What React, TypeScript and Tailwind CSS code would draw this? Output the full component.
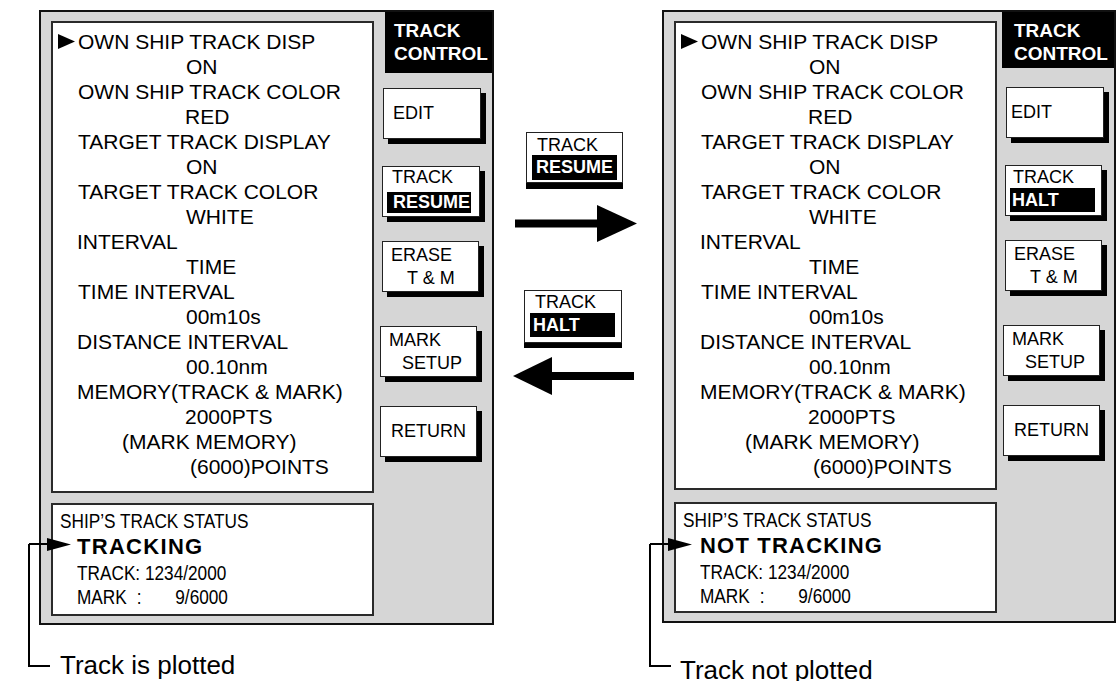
import React from "react";

const SANS = "font-['Liberation_Sans',Arial,sans-serif]";
// no Arial Narrow on the box, so squeeze regular sans instead
const NARROW = "origin-left scale-x-[0.82] whitespace-pre";

type MenuRow = { text: string; pl: string; marker?: boolean };

const menuRows: MenuRow[] = [
  { text: "OWN SHIP TRACK DISP", pl: "pl-[5px]", marker: true },
  { text: "ON", pl: "pl-[133px]" },
  { text: "OWN SHIP TRACK COLOR", pl: "pl-[25px]" },
  { text: "RED", pl: "pl-[132px]" },
  { text: "TARGET TRACK DISPLAY", pl: "pl-[25px]" },
  { text: "ON", pl: "pl-[133px]" },
  { text: "TARGET TRACK COLOR", pl: "pl-[25px]" },
  { text: "WHITE", pl: "pl-[133px]" },
  { text: "INTERVAL", pl: "pl-[24px]" },
  { text: "TIME", pl: "pl-[133px]" },
  { text: "TIME INTERVAL", pl: "pl-[25px]" },
  { text: "00m10s", pl: "pl-[133px]" },
  { text: "DISTANCE INTERVAL", pl: "pl-[24px]" },
  { text: "00.10nm", pl: "pl-[133px]" },
  { text: "MEMORY(TRACK & MARK)", pl: "pl-[24px]" },
  { text: "2000PTS", pl: "pl-[132px]" },
  { text: "(MARK MEMORY)", pl: "pl-[69px]" },
  { text: "(6000)POINTS", pl: "pl-[137px]" },
];

const Marker = () => (
  <svg width="17" height="15" viewBox="0 0 17 15" className="mr-[3px] shrink-0">
    <path d="M0 0 L17 7.5 L0 15 Z" fill="#000" />
  </svg>
);

const RightArrow = () => (
  <svg width="122" height="37" viewBox="0 0 122 37">
    <rect x="0" y="14.5" width="84" height="8" fill="#000" />
    <path d="M82 0 L122 18.5 L82 37 Z" fill="#000" />
  </svg>
);

const LeftArrow = () => (
  <svg width="121" height="38" viewBox="0 0 121 38">
    <path d="M0 19 L39 0 L39 38 Z" fill="#000" />
    <rect x="37" y="15" width="84" height="8" fill="#000" />
  </svg>
);

// framed key with a reversed (black) second line
const TrackKey = ({
  label,
  box,
  top,
  bar,
  barText,
}: {
  label: string;
  box: string;
  top: string;
  bar: string;
  barText: string;
}) => (
  <div className={`bg-white border border-[#222] flex flex-col ${box}`}>
    <div className={`text-[18px] leading-[20px] ${top}`}>TRACK</div>
    <div className={`bg-black text-white font-bold text-[18px] ${bar}`}>
      <span className={barText}>{label}</span>
    </div>
  </div>
);

const Key = ({ className, children }: { className: string; children: React.ReactNode }) => (
  <div
    className={`w-[97px] h-[51px] bg-white border border-[#222] shadow-[5px_5px_0_#000] flex flex-col justify-center text-[18px] leading-[23px] ${className}`}
  >
    {children}
  </div>
);

type PanelProps = {
  halt?: boolean;
  status: string;
  statusTrack: string;
  size: string;
  menuH: string;
  statusBox: string;
  header: string;
  headerPl: string;
  mt: string[];
  editPl: string;
};

const Panel = (p: PanelProps) => (
  <div className={`border-2 border-[#111] bg-[#d6d6d6] flex shrink-0 ${p.size}`}>
    <div className="flex flex-col pl-[10px] pt-[9px]">
      <div className={`w-[323px] bg-white border-2 border-[#2a2a2a] pt-[6px] text-[21px] leading-[25px] ${p.menuH}`}>
        {menuRows.map((r, i) => (
          <div key={i} className={`flex items-center whitespace-pre ${r.pl}`}>
            {r.marker && <Marker />}
            {r.text}
          </div>
        ))}
      </div>
      <div className={`w-[323px] bg-white border-2 border-[#2a2a2a] pt-[3px] ${p.statusBox}`}>
        <div className="pl-[7px] text-[21px] leading-[26px]">
          <div className={NARROW}>SHIP’S TRACK STATUS</div>
        </div>
        <div className={`font-bold text-[22px] leading-[26px] pl-[24px] ${p.statusTrack}`}>{p.status}</div>
        <div className="pl-[24px] text-[21px] leading-[25px]">
          <div className={NARROW}>TRACK: 1234/2000</div>
        </div>
        <div className="pl-[24px] text-[21px] leading-[24px]">
          <div className={`${NARROW} flex`}>
            <span className="w-[73px]">MARK</span>
            <span>:</span>
            <span className="ml-[41px]">9/6000</span>
          </div>
        </div>
      </div>
    </div>

    <div className="flex-1 flex flex-col">
      <div className={`bg-black text-white font-bold text-[19px] leading-[23px] pt-[7px] ${p.header} ${p.headerPl}`}>
        <div>TRACK</div>
        <div>CONTROL</div>
      </div>
      <Key className={`${p.mt[0]} ml-[9px] w-[98px] ${p.editPl}`}>EDIT</Key>
      <div className={`${p.mt[1]} ml-[8px] shadow-[5px_5px_0_#000] w-fit`}>
        {p.halt ? (
          <TrackKey
            label="HALT"
            box="w-[97px] h-[51px]"
            top="mt-[1px] pl-[7px]"
            bar="mt-[1px] ml-[4px] w-[85px] h-[24px] leading-[24px]"
            barText="pl-[2px]"
          />
        ) : (
          <TrackKey
            label="RESUME"
            box="w-[98px] h-[51px]"
            top="pl-[9px]"
            bar="mt-[5px] ml-[4px] w-[84px] h-[21px] leading-[21px]"
            barText="pl-[6px]"
          />
        )}
      </div>
      <Key className={`${p.mt[2]} ml-[8px]`}>
        <div className="pl-[8px]">ERASE</div>
        <div className="pl-[24px]">T &amp; M</div>
      </Key>
      <Key className={`${p.mt[3]} ml-[6px]`}>
        <div className="pl-[8px]">MARK</div>
        <div className="pl-[21px]">SETUP</div>
      </Key>
      <Key className={`${p.mt[4]} ml-[6px] pl-[10px]`}>RETURN</Key>
    </div>
  </div>
);

export default function App() {
  return (
    <div className={`${SANS} relative w-[1116px] h-[681px] bg-white text-black overflow-hidden`}>
      <div className="flex items-start pt-[10px]">
        <div className="ml-[39px]">
          <Panel
            status="TRACKING"
            statusTrack="tracking-[1.3px]"
            size="w-[455px] h-[615px]"
            menuH="h-[472px]"
            statusBox="mt-[10px] h-[113px]"
            header="ml-[11px] h-[61px]"
            headerPl="pl-[9px]"
            mt={["mt-[15px]", "mt-[27px]", "mt-[24px]", "mt-[34px]", "mt-[29px]"]}
            editPl="pl-[9px]"
          />
        </div>

        <div className="w-[168px] shrink-0 flex flex-col">
          <div className="mt-[122px] ml-[32px] shadow-[0_6px_0_#000] w-fit">
            <TrackKey
              label="RESUME"
              box="w-[97px] h-[51px]"
              top="mt-[2px] pl-[10px]"
              bar="ml-[5px] w-[85px] h-[25px] leading-[25px]"
              barText="pl-[4px]"
            />
          </div>
          <div className="mt-[22px] ml-[21px]">
            <RightArrow />
          </div>
          <div className="mt-[48px] ml-[30px] shadow-[0_5px_0_#000] w-fit">
            <TrackKey
              label="HALT"
              box="w-[98px] h-[53px]"
              top="mt-[1px] pl-[10px]"
              bar="mt-[1px] ml-[5px] w-[85px] h-[24px] leading-[24px]"
              barText="pl-[3px]"
            />
          </div>
          <div className="mt-[14px] ml-[19px]">
            <LeftArrow />
          </div>
        </div>

        <Panel
          halt
          status="NOT TRACKING"
          statusTrack="tracking-[1.2px]"
          size="w-[454px] h-[613px]"
          menuH="h-[469px]"
          statusBox="mt-[12px] h-[111px]"
          header="ml-[5px] h-[56px]"
          headerPl="pl-[12px]"
          mt={["mt-[19px]", "mt-[27px]", "mt-[24px]", "mt-[34px]", "mt-[29px]"]}
          editPl="pl-[4px]"
        />
      </div>

      <div className="flex text-[26px] leading-[30px]">
        <div className="w-[652px] pl-[60px] pt-[25px]">Track is plotted</div>
        <div className="pl-[28px] pt-[30px]">Track not plotted</div>
      </div>

      {/* callout lines pointing at the status line */}
      <svg className="absolute left-0 top-0 pointer-events-none" width="1116" height="681" viewBox="0 0 1116 681">
        <path d="M29 544 V666 H50 M29 544 H50" stroke="#000" strokeWidth="2" fill="none" />
        <path d="M47 538 L71 544.5 L47 551 Z" fill="#000" />
        <path d="M650 544 V666 H671 M650 544 H671" stroke="#000" strokeWidth="2" fill="none" />
        <path d="M668 538 L692 544.5 L668 551 Z" fill="#000" />
      </svg>
    </div>
  );
}
